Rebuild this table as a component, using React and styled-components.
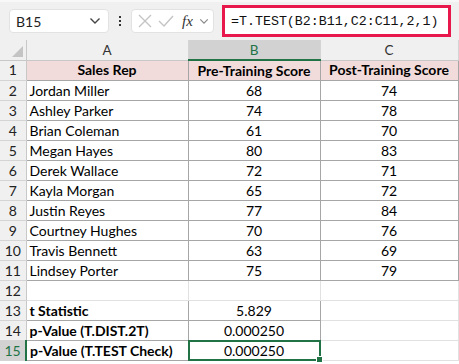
import React from 'react';
import styled, { createGlobalStyle } from 'styled-components';

const GlobalStyle = createGlobalStyle`
  html, body { margin: 0; padding: 0; background: #ffffff; }
  body { font-family: "Lato", "Liberation Sans", sans-serif; }
`;

const rows = [
  ['Jordan Miller', 68, 74],
  ['Ashley Parker', 74, 78],
  ['Brian Coleman', 61, 70],
  ['Megan Hayes', 80, 83],
  ['Derek Wallace', 72, 71],
  ['Kayla Morgan', 65, 72],
  ['Justin Reyes', 77, 84],
  ['Courtney Hughes', 70, 76],
  ['Travis Bennett', 63, 69],
  ['Lindsey Porter', 75, 79],
];

const Sheet = styled.div`
  width: 459px;
  height: 364px;
  overflow: hidden;
  background: #ffffff;
`;

const Toolbar = styled.div`
  height: 40px;
  box-sizing: border-box;
  background: #f0f0f0;
  border-top: 2px solid #f8f8f8;
  display: flex;
  align-items: center;
  padding: 0 8px 0 9px;
`;

const NameBox = styled.div`
  width: 100px;
  height: 24px;
  box-sizing: border-box;
  background: #ffffff;
  border: 1px solid #e2e2e2;
  border-radius: 4px;
  display: flex;
  align-items: center;
  justify-content: space-between;
  padding: 0 7px 0 6px;
  font-size: 14px;
  color: #222;
`;

const Dots = styled.div`
  width: 22px;
  display: flex;
  flex-direction: column;
  align-items: center;
  gap: 2px;
  span {
    width: 2px;
    height: 2px;
    background: #333;
  }
`;

const FxBox = styled.div`
  width: 83px;
  height: 24px;
  box-sizing: border-box;
  background: #ffffff;
  border: 1px solid #e2e2e2;
  border-radius: 4px;
  display: flex;
  align-items: center;
  padding: 0 4px 0 6px;
  gap: 6px;
`;

const Fx = styled.span`
  font-family: "Liberation Serif", serif;
  font-style: italic;
  font-size: 15px;
  color: #333;
  margin-left: 2px;
`;

const Formula = styled.div`
  margin-left: 8px;
  flex: 1;
  height: 32px;
  box-sizing: border-box;
  border: 3px solid #e8174c;
  background: #ffffff;
  display: flex;
  align-items: center;
  padding-left: 6px;
  font-family: "Liberation Mono", monospace;
  font-size: 13.3px;
  color: #111;
`;

const Grid = styled.table`
  border-collapse: collapse;
  table-layout: fixed;
  font-size: 14px;
  color: #000;
  width: 458px;
  margin-top: 0;
  tr { height: 20px; }
`;

const ColHead = styled.th`
  height: 19px;
  padding: 0;
  font-weight: normal;
  font-size: 13.5px;
  line-height: 18px;
  background: ${p => (p.$active ? '#d2d2d2' : '#f0f0f0')};
  color: ${p => (p.$active ? '#217346' : '#333')};
  border-right: 1px solid #d4d4d4;
  border-bottom: ${p => (p.$active ? '2px solid #217346' : '1px solid #c8c8c8')};
  text-align: center;
`;

const Corner = styled.th`
  height: 19px;
  padding: 0;
  background: #f0f0f0;
  border-right: 1px solid #c8c8c8;
  border-bottom: 1px solid #c8c8c8;
  position: relative;
  &::after {
    content: '';
    position: absolute;
    right: 3px;
    bottom: 3px;
    width: 0;
    height: 0;
    border-left: 11px solid transparent;
    border-bottom: 11px solid #c4c4c4;
  }
`;

const RowHead = styled.td`
  height: 19px;
  padding: 0;
  line-height: 18px;
  text-align: center;
  background: ${p => (p.$active ? '#d2d2d2' : '#f0f0f0')};
  color: ${p => (p.$active ? '#217346' : '#222')};
  border-right: ${p => (p.$active ? '2px solid #217346' : '1px solid #c8c8c8')};
  border-bottom: 1px solid #d4d4d4;
`;

const Cell = styled.td`
  height: 19px;
  padding: 0 3px;
  line-height: 18px;
  white-space: nowrap;
  overflow: visible;
  text-align: ${p => (p.$center ? 'center' : 'left')};
  font-weight: ${p => (p.$bold ? 700 : 400)};
  background: ${p => (p.$head ? '#f2dcdb' : '#ffffff')};
  border: 1px solid ${p => (p.$plain ? '#e1e1e1' : '#a6a6a6')};
`;

const Selected = styled(Cell)`
  position: relative;
  &::before {
    content: '';
    position: absolute;
    inset: -1px;
    border: 2px solid #217346;
    pointer-events: none;
  }
  &::after {
    content: '';
    position: absolute;
    right: -3px;
    bottom: -3px;
    width: 5px;
    height: 5px;
    background: #217346;
    border: 1px solid #fff;
  }
`;

const Chevron = ({ color = '#444', w = 12, h = 8 }) => (
  <svg width={w} height={h} viewBox="0 0 12 8">
    <path d="M1.5 1.5 L6 6 L10.5 1.5" fill="none" stroke={color} strokeWidth="1.4" />
  </svg>
);

export default function App() {
  return (
    <Sheet>
      <GlobalStyle />
      <Toolbar>
        <NameBox>
          <span>B15</span>
          <Chevron />
        </NameBox>
        <Dots><span /><span /><span /></Dots>
        <FxBox>
          <svg width="14" height="14" viewBox="0 0 14 14">
            <path d="M1 1 L13 13 M13 1 L1 13" stroke="#c4c4c4" strokeWidth="1.4" />
          </svg>
          <svg width="16" height="14" viewBox="0 0 16 14">
            <path d="M1 7 L6 12 L15 2" fill="none" stroke="#c4c4c4" strokeWidth="1.4" />
          </svg>
          <Fx>fx</Fx>
          <Chevron color="#888" w={10} h={7} />
        </FxBox>
        <Formula>=T.TEST(B2:B11,C2:C11,2,1)</Formula>
      </Toolbar>
      <Grid>
        <colgroup>
          <col style={{ width: 26 }} />
          <col style={{ width: 162 }} />
          <col style={{ width: 132 }} />
          <col style={{ width: 138 }} />
        </colgroup>
        <thead>
          <tr>
            <Corner />
            <ColHead>A</ColHead>
            <ColHead $active>B</ColHead>
            <ColHead>C</ColHead>
          </tr>
        </thead>
        <tbody>
          <tr>
            <RowHead>1</RowHead>
            <Cell $head $bold $center>Sales Rep</Cell>
            <Cell $head $bold $center>Pre-Training Score</Cell>
            <Cell $head $bold $center>Post-Training Score</Cell>
          </tr>
          {rows.map((r, i) => (
            <tr key={r[0]}>
              <RowHead>{i + 2}</RowHead>
              <Cell>{r[0]}</Cell>
              <Cell $center>{r[1]}</Cell>
              <Cell $center>{r[2]}</Cell>
            </tr>
          ))}
          <tr>
            <RowHead>12</RowHead>
            <Cell $plain />
            <Cell $plain />
            <Cell $plain />
          </tr>
          <tr>
            <RowHead>13</RowHead>
            <Cell $bold>t Statistic</Cell>
            <Cell $center>5.829</Cell>
            <Cell $plain />
          </tr>
          <tr>
            <RowHead>14</RowHead>
            <Cell $bold>p-Value (T.DIST.2T)</Cell>
            <Cell $center>0.000250</Cell>
            <Cell $plain />
          </tr>
          <tr>
            <RowHead $active>15</RowHead>
            <Cell $bold>p-Value (T.TEST Check)</Cell>
            <Selected $center>0.000250</Selected>
            <Cell $plain />
          </tr>
        </tbody>
      </Grid>
    </Sheet>
  );
}
